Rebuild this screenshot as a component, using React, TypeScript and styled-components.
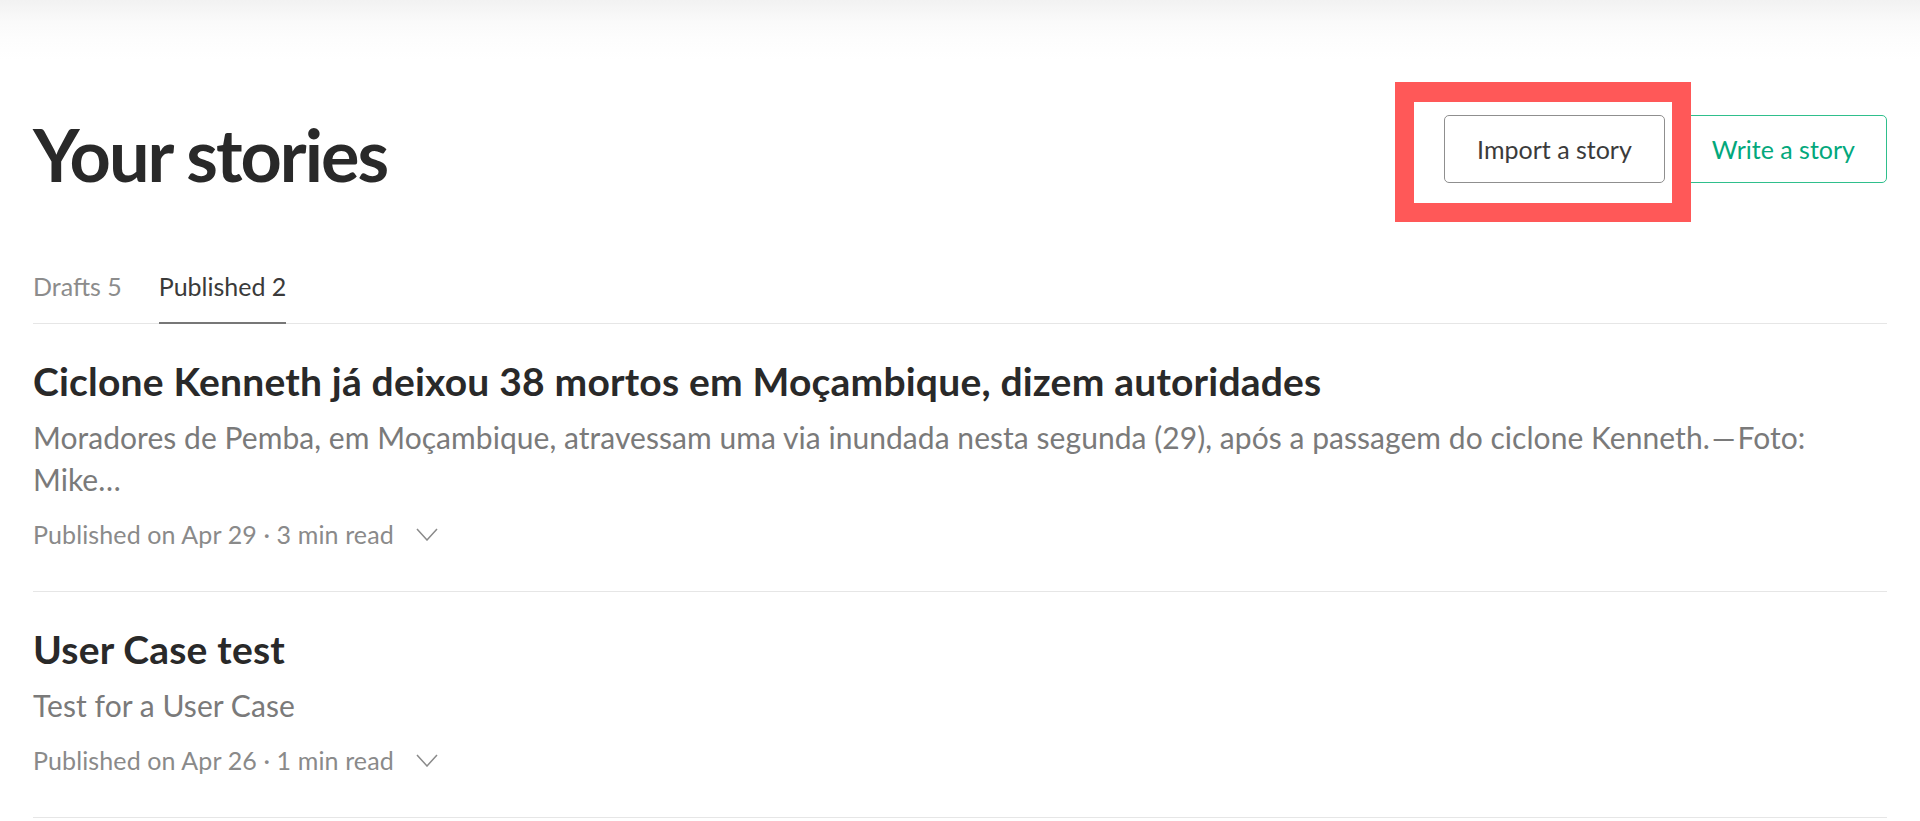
import React from "react";
import styled, { createGlobalStyle, css } from "styled-components";

const GlobalStyle = createGlobalStyle`
  html, body {
    margin: 0;
    padding: 0;
    background: #ffffff;
  }
  body {
    font-family: Lato, "Noto Sans", "Liberation Sans", sans-serif;
    -webkit-font-smoothing: antialiased;
  }
  * { box-sizing: border-box; }
`;

const Page = styled.div`
  min-height: 821px;
  background: linear-gradient(to bottom, #f2f2f2 0px, #fafafa 22px, #fdfdfd 40px, #ffffff 60px) no-repeat;
  background-size: 100% 60px;
`;

const Main = styled.main`
  padding: 111px 33px 0;
`;

const Header = styled.header`
  display: flex;
  justify-content: space-between;
  align-items: flex-start;
`;

const Heading = styled.h1`
  margin: 0;
  font-size: 72px;
  line-height: 1.2;
  font-weight: 700;
  color: #292929;
  letter-spacing: -2px;
`;

const Actions = styled.div`
  display: flex;
  gap: 15px;
  margin-top: 4px;
`;

const Highlight = styled.div`
  position: relative;
  display: flex;
`;

const Annotation = styled.span`
  position: absolute;
  left: -49px;
  top: -33px;
  width: 296px;
  height: 140px;
  border: 19px solid #ff5858;
  border-top-width: 20px;
  z-index: 2;
  pointer-events: none;
`;

const Button = styled.button<{ $variant: "neutral" | "primary" }>`
  height: 68px;
  border-radius: 5px;
  background: #ffffff;
  font-family: inherit;
  font-size: 25px;
  font-weight: 400;
  cursor: pointer;
  ${({ $variant }) =>
    $variant === "primary"
      ? css`
          padding: 0 31px;
          color: #03a87c;
          border: 1.5px solid #2fbf8c;
        `
      : css`
          padding: 0 32px;
          color: #3b3b3b;
          border: 1.5px solid #8f8f8f;
        `}
`;

const Tabs = styled.nav`
  display: flex;
  gap: 37px;
  margin-top: 72px;
  border-bottom: 1px solid #e6e6e6;
`;

const Tab = styled.a<{ $active?: boolean }>`
  display: block;
  padding-bottom: 18px;
  font-size: 25px;
  line-height: 35px;
  text-decoration: none;
  color: ${({ $active }) => ($active ? "#3a3a3a" : "#8c8c8c")};
  border-bottom: 2px solid ${({ $active }) => ($active ? "#777777" : "transparent")};
  margin-bottom: -1px;
`;

const StoryList = styled.section``;

const Story = styled.article`
  padding: 35px 0 41px;
  border-bottom: 1px solid #e6e6e6;
`;

const StoryTitle = styled.h2`
  margin: 0 0 12px;
  font-size: 39px;
  line-height: 45px;
  font-weight: 700;
  color: #292929;
  letter-spacing: 0.2px;
`;

const StorySubtitle = styled.p`
  margin: 0 0 19px;
  font-size: 30px;
  line-height: 42px;
  letter-spacing: 0.05px;
  color: #7a7a7a;
`;

const Meta = styled.div`
  display: flex;
  align-items: center;
  gap: 22px;
  font-size: 25px;
  line-height: 31px;
  letter-spacing: 0.12px;
  color: #8a8a8a;
`;

const Chevron = styled.svg`
  width: 22px;
  height: 13px;
  flex: none;
`;

const ChevronDown = () => (
  <Chevron viewBox="0 0 22 13" fill="none">
    <polyline points="1,1 11,12 21,1" stroke="#8a8a8a" strokeWidth="1.5" strokeLinejoin="miter" />
  </Chevron>
);

const stories = [
  {
    title: "Ciclone Kenneth já deixou 38 mortos em Moçambique, dizem autoridades",
    subtitle:
      "Moradores de Pemba, em Moçambique, atravessam uma via inundada nesta segunda (29), após a passagem do ciclone Kenneth.\u200a—\u200aFoto: Mike…",
    meta: "Published on Apr 29 · 3 min read",
  },
  {
    title: "User Case test",
    subtitle: "Test for a User Case",
    meta: "Published on Apr 26 · 1 min read",
  },
];

export default function App() {
  return (
    <>
      <GlobalStyle />
      <Page>
        <Main>
          <Header>
            <Heading>Your stories</Heading>
            <Actions>
              <Highlight>
                <Button $variant="neutral">Import a story</Button>
                <Annotation />
              </Highlight>
              <Button $variant="primary">Write a story</Button>
            </Actions>
          </Header>
          <Tabs>
            <Tab href="#drafts">Drafts 5</Tab>
            <Tab href="#published" $active>
              Published 2
            </Tab>
          </Tabs>
          <StoryList>
            {stories.map((s) => (
              <Story key={s.title}>
                <StoryTitle>{s.title}</StoryTitle>
                <StorySubtitle>{s.subtitle}</StorySubtitle>
                <Meta>
                  <span>{s.meta}</span>
                  <ChevronDown />
                </Meta>
              </Story>
            ))}
          </StoryList>
        </Main>
      </Page>
    </>
  );
}
